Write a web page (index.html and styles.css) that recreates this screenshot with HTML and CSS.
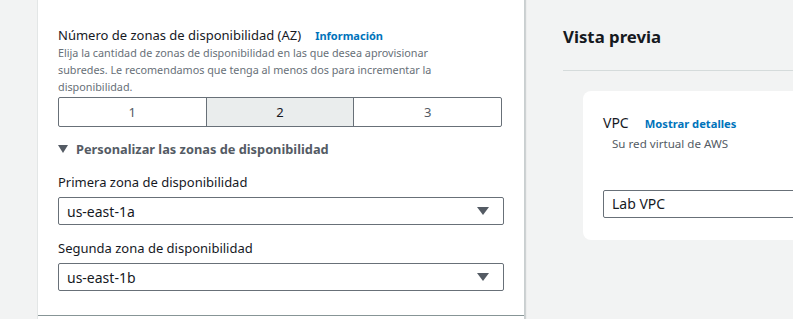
FILE: index.html
```html
<!DOCTYPE html>
<html lang="es">
<head>
<meta charset="utf-8">
<link rel="stylesheet" href="styles.css">
</head>
<body>
<div class="page">
  <section class="card">
    <div class="card-body">
      <div class="field-title">
        <span class="label">Número de zonas de disponibilidad (AZ)</span>
        <a class="info">Información</a>
      </div>
      <p class="desc">Elija la cantidad de zonas de disponibilidad en las que desea aprovisionar subredes. Le recomendamos que tenga al menos dos para incrementar la disponibilidad.</p>
      <div class="segmented">
        <div class="seg">1</div>
        <div class="seg active">2</div>
        <div class="seg">3</div>
      </div>
      <div class="expander"><span class="caret"></span>Personalizar las zonas de disponibilidad</div>
      <div class="label first">Primera zona de disponibilidad</div>
      <div class="select"><span>us-east-1a</span><span class="caret dark"></span></div>
      <div class="label second">Segunda zona de disponibilidad</div>
      <div class="select sel2"><span>us-east-1b</span><span class="caret dark"></span></div>
    </div>
  </section>
  <aside class="preview">
    <h2 class="preview-title">Vista previa</h2>
    <div class="preview-card">
      <div class="vpc-head"><span class="vpc">VPC</span><a class="info small">Mostrar detalles</a></div>
      <div class="vpc-sub">Su red virtual de AWS</div>
      <div class="vpc-input">Lab VPC</div>
    </div>
  </aside>
</div>
</body>
</html>
```
FILE: styles.css
```css
html, body {
  margin: 0;
  padding: 0;
  background: #f2f3f3;
  overflow: hidden;
  width: 793px;
  height: 319px;
}
body {
  font-family: "Noto Sans", "Open Sans", sans-serif;
  color: #16191f;
}
.page {
  display: flex;
  align-items: flex-start;
  padding-left: 37px;
  height: 319px;
  overflow: hidden;
}
.card {
  flex: none;
  width: 486px;
  background: #fff;
  border-left: 1px solid #e3e6e6;
  border-right: 1px solid #c9cfd0;
  box-shadow: 1px 0 1px rgba(0, 28, 36, 0.15);
  height: 319px;
}
.card-body {
  padding: 25px 20px 24px 20px;
  border-bottom: 1px solid #879596;
}
.field-title {
  display: flex;
  align-items: baseline;
  gap: 14px;
  height: 20px;
  line-height: 20px;
}
.label {
  font-size: 13px;
  line-height: 20px;
  color: #16191f;
}
.info {
  font-size: 11px;
  font-weight: 700;
  color: #0073bb;
}
.info.small {
  font-size: 11.2px;
}
.desc {
  margin: -1px 0 0 0;
  font-size: 10.8px;
  line-height: 17px;
  color: #687078;
  width: 420px;
}
.segmented {
  display: flex;
  width: 444px;
  height: 30px;
  margin-top: 2px;
  border: 1px solid #687078;
  border-radius: 2px;
  box-sizing: border-box;
}
.seg {
  flex: 1;
  display: flex;
  align-items: center;
  justify-content: center;
  font-size: 13px;
  color: #545b64;
}
.seg + .seg {
  border-left: 1px solid #687078;
}
.seg.active {
  background: #eaeded;
  color: #16191f;
}
.expander {
  margin-top: 12px;
  display: flex;
  align-items: center;
  gap: 8px;
  font-size: 12.8px;
  font-weight: 700;
  line-height: 20px;
  color: #545b64;
}
.caret {
  width: 0;
  height: 0;
  border-left: 5px solid transparent;
  border-right: 5px solid transparent;
  border-top: 8px solid #545b64;
}
.label.first {
  margin-top: 13px;
}
.label.second {
  margin-top: 13px;
}
.select {
  margin-top: 5px;
  width: 446px;
  height: 28px;
  box-sizing: border-box;
  border: 1px solid #687078;
  border-radius: 2px;
  display: flex;
  align-items: center;
  justify-content: space-between;
  padding: 0 14px 0 8px;
  font-size: 14px;
}
.caret.dark {
  border-left-width: 6px;
  border-right-width: 6px;
  border-top-width: 8px;
}
.preview {
  flex: none;
  margin-left: 38px;
  width: 400px;
}
.preview-title {
  margin: 0;
  font-size: 16.8px;
  font-weight: 700;
  line-height: 24px;
  padding-top: 25px;
  padding-bottom: 21px;
  border-bottom: 1px solid #d5dbdb;
}
.preview-card {
  margin: 20px 0 0 20px;
  background: #fff;
  border-radius: 8px;
  padding: 21px 20px 22px 20px;
  height: 149px;
  box-sizing: border-box;
}
.vpc-head {
  display: flex;
  align-items: baseline;
  gap: 16px;
  line-height: 22px;
}
.vpc {
  font-size: 14px;
}
.vpc-sub {
  font-size: 11.6px;
  color: #545b64;
  line-height: 18px;
  padding-left: 9px;
}
.vpc-input {
  margin-top: 37px;
  height: 28px;
  box-sizing: border-box;
  border: 1px solid #687078;
  border-radius: 2px;
  padding-left: 8px;
  font-size: 14px;
  line-height: 26px;
}
```
